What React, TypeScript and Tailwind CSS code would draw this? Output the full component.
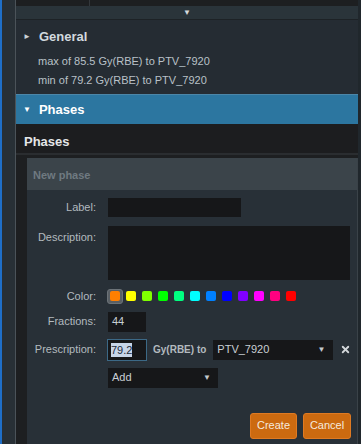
import { X } from "lucide-react";

const swatches = [
  "#ff7f00",
  "#ffff00",
  "#80ff00",
  "#00ff00",
  "#00ff80",
  "#00ffff",
  "#0080ff",
  "#0000ff",
  "#8000ff",
  "#ff00ff",
  "#ff0080",
  "#ff0000",
];

function Caret({ className = "" }: { className?: string }) {
  return <span className={"text-[8px] leading-none text-[#c4c9cd] " + className}>▼</span>;
}

function FieldLabel({ children, className = "" }: { children: React.ReactNode; className?: string }) {
  return (
    <div className={"w-[69px] shrink-0 text-right text-[11px] text-[#b3babf] " + className}>{children}</div>
  );
}

export default function App() {
  return (
    <div className="flex h-[444px] w-[361px] overflow-hidden bg-[#252c33] font-['Liberation_Sans',Arial,sans-serif]">
      <div className="w-[2px] shrink-0 bg-[#1f6fc8]" />
      <div className="w-[13px] shrink-0 bg-[#283036]" />
      <div className="w-px shrink-0 bg-[#4b5359]" />

      <div className="flex w-[342px] shrink-0 flex-col">
        <div className="flex h-[6px] shrink-0 bg-[#1d1f21]">
          <div className="w-[74px] border-r border-[#33373b]" />
        </div>
        <div className="flex h-[14px] shrink-0 items-center justify-center border-b border-[#1d2226] bg-[#2a343a]">
          <Caret className="text-[#d5d9dc]" />
        </div>

        <div className="h-[74px] shrink-0 bg-[#252c33]">
          <div className="flex items-center pl-[7px] pt-[7px]">
            <span className="text-[8px] text-[#c9d0d6]">►</span>
            <span className="ml-[8px] text-[13px] font-bold text-[#d2d9df]">General</span>
          </div>
          <div className="mt-[5px] pl-[22px] text-[11px] leading-[19px] text-[#b9c1c8]">
            <div>max of 85.5 Gy(RBE) to PTV_7920</div>
            <div>min of 79.2 Gy(RBE) to PTV_7920</div>
          </div>
        </div>

        <div className="flex h-[30px] shrink-0 items-center border-t border-[#4c86a8] bg-[#2c76a0] pl-[7px]">
          <span className="text-[8px] text-white">▼</span>
          <span className="ml-[8px] text-[13px] font-bold text-white">Phases</span>
        </div>

        <div className="flex h-[31px] shrink-0 items-center border-b-2 border-[#2a2d30] bg-[#1c1d1f] pl-[8px] pt-[6px]">
          <span className="text-[13px] font-bold text-[#e4e6e8]">Phases</span>
        </div>

        <div className="flex flex-1 bg-[#1d1f21]">
          <div className="w-[11px] shrink-0" />
          <div className="mt-[3px] flex flex-1 flex-col border-r border-[#3a4248] bg-[#283037]">
            <div className="flex h-[32px] shrink-0 items-center bg-[#3b444a] pl-[6px] pt-[3px]">
              <span className="text-[11px] font-bold text-[#6f7a81]">New phase</span>
            </div>

            <div className="mt-[8px] flex items-center gap-[12px]">
              <FieldLabel>Label:</FieldLabel>
              <div className="h-[19px] w-[133px] bg-[#161719]" />
            </div>

            <div className="mt-[9px] flex items-start gap-[12px]">
              <FieldLabel className="pt-[3px]">Description:</FieldLabel>
              <div className="h-[54px] w-[242px] bg-[#161719]" />
            </div>

            <div className="mt-[8px] flex items-center gap-[11px]">
              <FieldLabel>Color:</FieldLabel>
              <div className="flex">
                {swatches.map((c, i) => (
                  <div
                    key={c}
                    className={
                      "flex h-[15px] w-4 items-center justify-center rounded-[3px] " +
                      (i === 0 ? "border border-[#6c7378] bg-[#595f64]" : "")
                    }
                  >
                    <div className="h-[10px] w-[10px] rounded-[2px]" style={{ backgroundColor: c }} />
                  </div>
                ))}
              </div>
            </div>

            <div className="mt-[7px] flex items-center gap-[12px]">
              <FieldLabel>Fractions:</FieldLabel>
              <div className="flex h-[20px] w-[38px] items-center bg-[#161719] pl-[4px] text-[11px] text-[#c9cfd4]">
                44
              </div>
            </div>

            <div className="mt-[7px] flex items-center">
              <FieldLabel>Prescription:</FieldLabel>
              <div className="ml-[11px] flex h-[22px] w-[40px] items-center border border-[#3c6986] bg-[#161719] pl-[3px]">
                <span className="bg-[#c7d5e8] text-[11px] leading-[14px] text-[#1b2a3c]">79.2</span>
              </div>
              <span className="ml-[6px] text-[10px] font-bold text-[#b3babf]">Gy(RBE) to</span>
              <div className="ml-[7px] flex h-[20px] w-[120px] items-center justify-between bg-[#161719] pl-[4px] pr-[8px]">
                <span className="text-[11px] text-[#c9cfd4]">PTV_7920</span>
                <Caret />
              </div>
              <X className="ml-[7px] text-[#d4d8db]" size={11} strokeWidth={4} />
            </div>

            <div className="mt-[7px] flex items-center">
              <div className="w-[81px] shrink-0" />
              <div className="flex h-[20px] w-[110px] items-center justify-between bg-[#161719] pl-[4px] pr-[7px]">
                <span className="text-[11px] text-[#c9cfd4]">Add</span>
                <Caret />
              </div>
            </div>

            <div className="mt-[25px] flex justify-end gap-[6px] pr-[6px]">
              <button
                type="button"
                className="h-[26px] w-[47px] rounded-[3px] border border-[#df7a22] bg-[#cc6a10] text-[11px] text-[#f5e9de]"
              >
                Create
              </button>
              <button
                type="button"
                className="h-[26px] w-[48px] rounded-[3px] border border-[#df7a22] bg-[#cc6a10] text-[11px] text-[#f5e9de]"
              >
                Cancel
              </button>
            </div>
          </div>
        </div>
      </div>

      <div className="w-[3px] shrink-0 bg-[#20272c]" />
    </div>
  );
}
